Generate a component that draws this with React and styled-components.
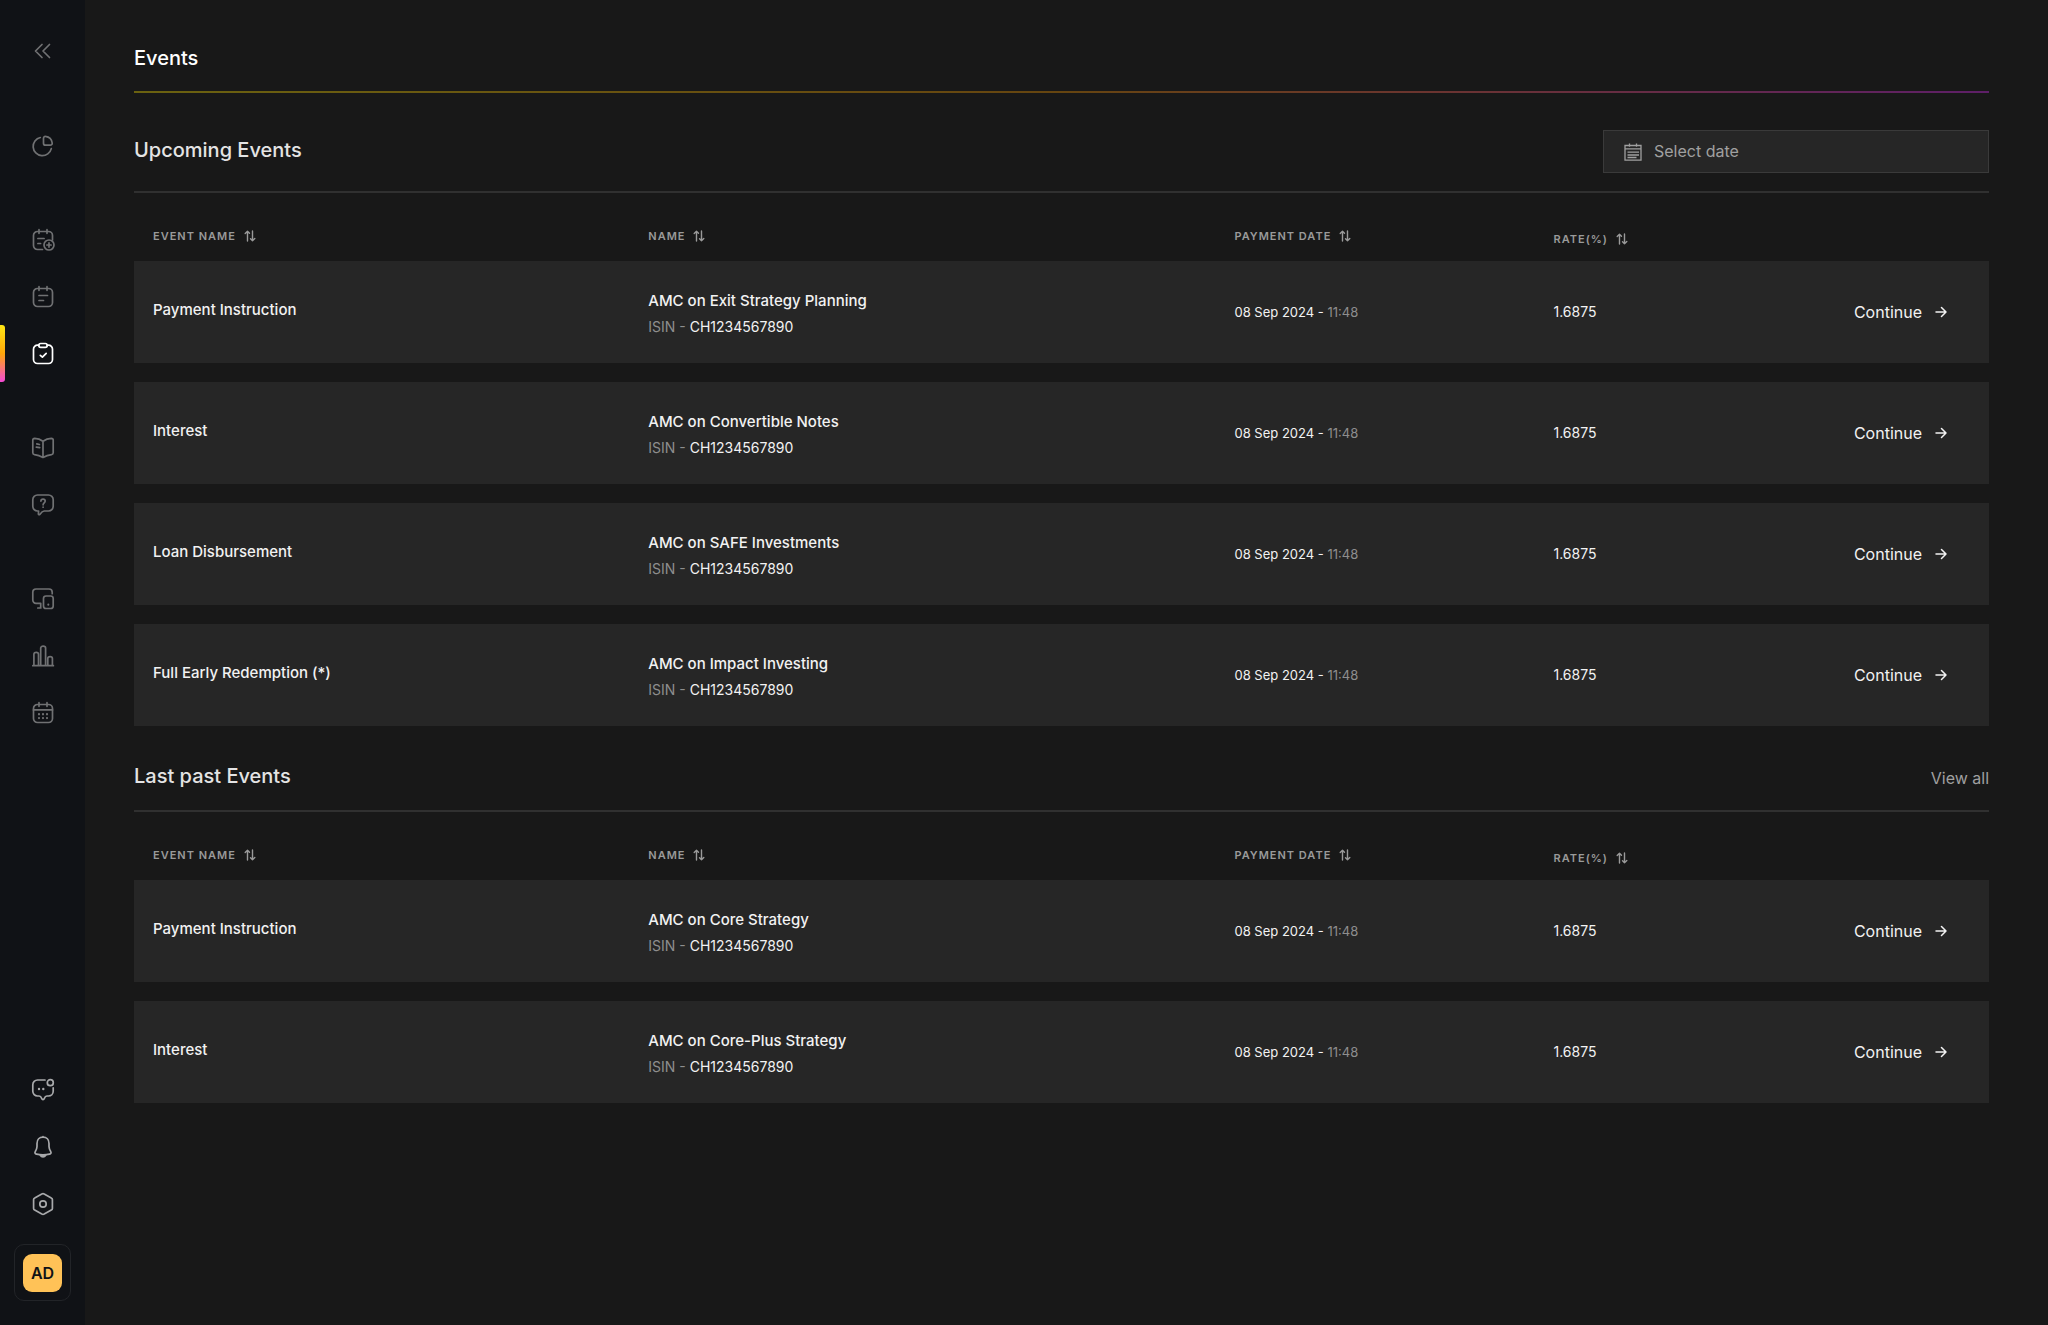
import React, { useState } from "react";
import styled, { createGlobalStyle } from "styled-components";

const GlobalStyle = createGlobalStyle`
  * {
    box-sizing: border-box;
  }
  body {
    margin: 0;
    background: #181818;
    color: #f2f2f2;
    font-family: Inter, "Liberation Sans", sans-serif;
    font-size: 16px;
    line-height: 24px;
  }
  button,
  input {
    font: inherit;
    color: inherit;
  }
  button {
    padding: 0;
    border: 0;
    background: none;
    cursor: pointer;
  }
`;

const Layout = styled.div`
  display: flex;
  min-height: 100vh;
`;

const Sidebar = styled.aside`
  flex: none;
  display: flex;
  flex-direction: column;
  align-items: stretch;
  width: 85px;
  padding: 22px 0 24px;
  background: #101216;
`;

const Nav = styled.nav`
  display: flex;
  flex-direction: column;
  gap: 37px;
  margin: 38px 0 auto;
`;

const NavGroup = styled.div`
  display: flex;
  flex-direction: column;
`;

const NavButton = styled.button`
  position: relative;
  display: flex;
  align-items: center;
  justify-content: center;
  height: 57px;
  color: ${({ $active, $bright }) =>
    $active ? "#ffffff" : $bright ? "#a8a9ab" : "#707173"};
  ${({ $active }) =>
    $active &&
    `
    &::before {
      content: "";
      position: absolute;
      left: 0;
      top: 0;
      width: 5px;
      height: 100%;
      border-radius: 0 3px 3px 0;
      background: linear-gradient(#ffe714, #ffa60a 50%, #f54ad6);
    }
  `}
`;

const Account = styled.button`
  display: flex;
  align-items: center;
  justify-content: center;
  align-self: center;
  width: 57px;
  height: 57px;
  margin-top: 12px;
  border: 1px solid #222428;
  border-radius: 10px;
`;

const Avatar = styled.span`
  width: 39px;
  height: 38px;
  border-radius: 9px;
  background: #ffc257;
  color: #101216;
  font-weight: 600;
  line-height: 38px;
`;

const Main = styled.main`
  flex: 1;
  min-width: 0;
  padding: 44px 59px 44px 49px;
`;

const PageTitle = styled.h1`
  margin: 0;
  padding-bottom: 19px;
  border-bottom: 2px solid;
  border-image: linear-gradient(
      90deg,
      #6b6210,
      #664510 50%,
      #6b3430 70%,
      #5e1f68
    )
    1;
  color: #ffffff;
  font-size: 20px;
  font-weight: 500;
  line-height: 28px;
`;

const SectionHead = styled.header`
  display: flex;
  align-items: ${({ $compact }) => ($compact ? "flex-end" : "flex-start")};
  justify-content: space-between;
  padding: ${({ $compact }) => ($compact ? "17px 0 20px" : "37px 0 18px")};
  border-bottom: 2px solid #303030;
`;

const SectionTitle = styled.h2`
  margin: 0;
  color: #e4e4e4;
  font-size: 20px;
  font-weight: 500;
  line-height: ${({ $tall }) => ($tall ? "40px" : "28px")};
`;

const DateField = styled.label`
  display: flex;
  align-items: center;
  gap: 12px;
  width: 386px;
  height: 43px;
  padding: 0 20px;
  border: 1px solid #3a3a3a;
  background: #262626;
  color: #a0a0a0;
`;

const DateInput = styled.input`
  flex: 1;
  min-width: 0;
  height: 24px;
  padding: 0 0 2px;
  border: 0;
  outline: 0;
  background: none;
  &::placeholder {
    color: #a0a0a0;
    opacity: 1;
  }
`;

const ViewAll = styled.a`
  color: #a0a0a0;
  text-decoration: none;
`;

const Table = styled.table`
  width: 100%;
  table-layout: fixed;
  border-spacing: 0;
`;

const HeadCell = styled.th`
  width: ${({ $width }) => $width};
  height: 68px;
  padding: ${({ $low }) => ($low ? "39px" : "36px")} 19px 0;
  text-align: left;
  vertical-align: top;
`;

const SortButton = styled.button`
  display: flex;
  align-items: center;
  gap: 8px;
  color: #9a9a9a;
  font-size: 11px;
  font-weight: 600;
  letter-spacing: 1px;
  line-height: 14px;
  text-transform: uppercase;
`;

const Cell = styled.td`
  height: 121px;
  padding: 0 19px;
  border-bottom: 19px solid transparent;
  background: #262626;
  background-clip: padding-box;
  font-size: ${({ $size }) => $size || "16px"};
`;

const EventName = styled.div`
  padding-bottom: 4px;
  font-size: 15px;
  font-weight: 500;
`;

const ProductName = styled.div`
  padding-top: 2px;
  font-size: 15px;
  font-weight: 500;
`;

const Isin = styled.div`
  margin-top: 4px;
  font-size: 14px;
  line-height: 20px;
`;

const Muted = styled.span`
  color: #8e8e8e;
`;

const ContinueCell = styled(Cell)`
  padding-right: 42px;
`;

const Continue = styled.button`
  display: flex;
  align-items: center;
  gap: 13px;
  margin-left: auto;
`;

const Svg = ({ size = 24, stroke = 1.7, children }) => (
  <svg
    width={size}
    height={size}
    viewBox={`0 0 ${size} ${size}`}
    fill="none"
    stroke="currentColor"
    strokeWidth={stroke}
    strokeLinecap="round"
    strokeLinejoin="round"
    aria-hidden="true"
  >
    {children}
  </svg>
);

const PAD =
  "M6.5 3.5h11a4 4 0 0 1 4 4v10a4 4 0 0 1-4 4h-11a4 4 0 0 1-4-4v-10a4 4 0 0 1 4-4z";

const icons = {
  collapse: <path d="M11 5.500 4.500 12l6.500 6.500M18.500 5.500 12 12l6.500 6.500" />,
  overview: (
    <>
      <path d="M9.300 3.500A9.200 9.200 0 1 0 20.300 14.600" />
      <path d="M12.500 4.300c0-1.200.9-2.100 2.100-1.900 3.500.5 6.100 3.200 6.600 6.600.2 1.200-.7 2.200-1.900 2.200h-4.800a2 2 0 0 1-2-2z" />
    </>
  ),
  eventAdd: (
    <>
      <path d="M11.500 21.500h-5a4 4 0 0 1-4-4v-10a4 4 0 0 1 4-4h11a4 4 0 0 1 4 4v4.500M8 1.700v3.600M16 1.700v3.600M6.900 10.500h6.200M6.900 15.500h2.700" />
      <circle cx="18" cy="17" r="5" />
      <path d="M18 14.900v4.200M15.900 17h4.200" />
    </>
  ),
  eventList: (
    <>
      <path d={PAD} />
      <path d="M8 1.700v3.600M16 1.700v3.600M8 10.500h8.500M8 15.500h4.500" />
    </>
  ),
  eventCheck: (
    <>
      <path d="M7.800 3.200h-1.300a4 4 0 0 0-4 4v10.300a4 4 0 0 0 4 4h11a4 4 0 0 0 4-4v-10.300a4 4 0 0 0-4-4h-1.300" />
      <rect x="7.800" y="1.500" width="8.400" height="3.800" rx="1.900" />
      <path d="m9.300 13.300 2.100 1.900 3.800-3.900" />
    </>
  ),
  book: (
    <>
      <path d="M12 5.200C9.800 3.600 6.900 2.400 3.700 2.300 2.600 2.300 1.800 3 1.800 4.100v12.600c0 1 .7 1.700 1.700 1.900 3.100.4 5.900 1.400 8.500 2.900 2.600-1.500 5.400-2.500 8.500-2.900 1-.2 1.700-.9 1.700-1.900V4.100c0-1.100-.8-1.800-1.900-1.800C17.100 2.400 14.200 3.600 12 5.200zM12 5.200v16.300" />
      <path d="m5.800 7.900 2.600.6M5.300 11.100l3.400.6" />
    </>
  ),
  help: (
    <>
      <path d="M6.500 2h11a4.700 4.700 0 0 1 4.700 4.700v6.600A4.700 4.700 0 0 1 17.500 18h-4.300c-1.300.2-2.700 1.200-4.200 3.200-.7.900-1.700.6-1.600-.5l.2-2.700H6.500a4.700 4.700 0 0 1-4.700-4.700V6.700A4.700 4.700 0 0 1 6.500 2z" />
      <path d="M9.900 8.100c.1-2.800 4.300-2.700 4.300 0 0 1.800-2.100 1.800-2.100 3.700M12.100 14.100v.1" />
    </>
  ),
  devices: (
    <>
      <path d="M21.200 6.700V5.200A3.200 3.200 0 0 0 18 2H5a3.200 3.200 0 0 0-3.200 3.200v7.900A3.200 3.200 0 0 0 5 16.300h4.700v4.700M6.800 21h3" />
      <rect x="12.500" y="9" width="9.700" height="12.500" rx="2.500" />
      <path d="M17.300 17.500v.3" strokeWidth="2" />
    </>
  ),
  stats: (
    <path d="M1.800 21.700h20.600M2.900 21.500V10.200c0-2.500 4.600-2.500 4.600 0v11.300M9.700 21.500V4.100c0-2.700 4.900-2.700 4.900 0v17.400M16.800 21.500v-7c0-2.500 4.600-2.500 4.600 0v7" />
  ),
  calendar: (
    <>
      <path d={PAD} />
      <path d="M8 1.700v3.600M16 1.700v3.600M2.500 8.900h19" />
      <path
        d="M8 13.200v.1M12 13.200v.1M16 13.200v.1M8 17v.1M12 17v.1M16 17v.1"
        strokeWidth="2.200"
      />
    </>
  ),
  chat: (
    <>
      <path d="M14 2H6.500a4.700 4.700 0 0 0-4.700 4.700v6.600A4.700 4.700 0 0 0 6.500 18h1.600c1.500 0 2 .8 2.600 2.500.5 1.400 2.100 1.400 2.600 0 .6-1.700 1.100-2.500 2.600-2.500h1.600a4.700 4.700 0 0 0 4.700-4.700v-3.500" />
      <circle cx="19.300" cy="4.700" r="3" />
      <path d="M8 11v.1M12.300 11v.1" strokeWidth="2.400" />
    </>
  ),
  bell: (
    <>
      <path d="M12 2.200c-3.600 0-6 2.500-6 6.200v3.200c0 1.900-.7 3.300-1.700 4.900-.8 1.200-.2 2.300 1.100 2.600 4.300.9 8.900.9 13.200 0 1.300-.3 1.900-1.400 1.100-2.600-1-1.600-1.700-3-1.700-4.900V8.400c0-3.700-2.400-6.200-6-6.200zM12 1.500v.7" />
      <path d="M9.300 20.300c1.200 2 4.200 2 5.400 0z" fill="currentColor" />
    </>
  ),
  settings: (
    <>
      <path d="M10.800 1.900 3.700 5.900c-.8.400-1.100 1-1.100 1.700v8.800c0 .7.300 1.300 1.100 1.700l7.100 4c.8.400 1.600.4 2.400 0l7.100-4c.8-.4 1.100-1 1.100-1.700V7.600c0-.7-.3-1.300-1.100-1.700l-7.100-4c-.8-.4-1.600-.4-2.400 0z" />
      <circle cx="12" cy="12" r="3.200" />
    </>
  ),
};

const SortIcon = () => (
  <Svg size={12} stroke={1.4}>
    <path d="M3.500 11V1.200M1.200 3.500l2.300-2.300 2 2M8.500 1v9.800M6.500 8.800l2 2 2.300-2.300" />
  </Svg>
);

const ArrowIcon = () => (
  <Svg size={12} stroke={1.5}>
    <path d="M1 6h10M6.500 1.500 11 6l-4.500 4.500" />
  </Svg>
);

const DateIcon = () => (
  <Svg size={18} stroke={1.3}>
    <path
      d="M1 2.500h16v14.700H1zM1 5.800h16M5.500.5v3.300M12.500.5v3.300M3.500 9.200h11.500M3.500 12h11.500M3.500 14.500h9"
      strokeLinecap="butt"
      strokeLinejoin="miter"
    />
  </Svg>
);

const navGroups = [
  [["overview", "Overview"]],
  [
    ["eventAdd", "New event"],
    ["eventList", "Products"],
    ["eventCheck", "Events"],
  ],
  [
    ["book", "Guide"],
    ["help", "Help"],
  ],
  [
    ["devices", "Devices"],
    ["stats", "Statistics"],
    ["calendar", "Calendar"],
  ],
];

const footerItems = [
  ["chat", "Messages"],
  ["bell", "Notifications"],
  ["settings", "Settings"],
];

const columns = [
  { label: "Event name", width: "26.7%" },
  { label: "Name", width: "31.6%" },
  { label: "Payment date", width: "17.2%" },
  { label: "Rate(%)", width: "12%", low: true },
];

const upcoming = [
  { event: "Payment Instruction", name: "AMC on Exit Strategy Planning" },
  { event: "Interest", name: "AMC on Convertible Notes" },
  { event: "Loan Disbursement", name: "AMC on SAFE Investments" },
  { event: "Full Early Redemption (*)", name: "AMC on Impact Investing" },
];

const past = [
  { event: "Payment Instruction", name: "AMC on Core Strategy" },
  { event: "Interest", name: "AMC on Core-Plus Strategy" },
];

const EventsTable = ({ rows }) => (
  <Table>
    <thead>
      <tr>
        {columns.map(({ label, width, low }) => (
          <HeadCell key={label} scope="col" $width={width} $low={low}>
            <SortButton type="button">
              {label}
              <SortIcon />
            </SortButton>
          </HeadCell>
        ))}
        <HeadCell as="td" />
      </tr>
    </thead>
    <tbody>
      {rows.map(({ event, name }) => (
        <tr key={name}>
          <Cell>
            <EventName>{event}</EventName>
          </Cell>
          <Cell>
            <ProductName>{name}</ProductName>
            <Isin>
              <Muted>ISIN - </Muted>CH1234567890
            </Isin>
          </Cell>
          <Cell $size="13px">
            08 Sep 2024 - <Muted>11:48</Muted>
          </Cell>
          <Cell $size="14px">1.6875</Cell>
          <ContinueCell>
            <Continue type="button">
              Continue
              <ArrowIcon />
            </Continue>
          </ContinueCell>
        </tr>
      ))}
    </tbody>
  </Table>
);

const App = () => {
  const [active, setActive] = useState("eventCheck");
  const [date, setDate] = useState("");

  return (
    <Layout>
      <GlobalStyle />
      <Sidebar>
        <NavButton type="button" aria-label="Collapse menu">
          <Svg>{icons.collapse}</Svg>
        </NavButton>
        <Nav>
          {navGroups.map((group) => (
            <NavGroup key={group[0][0]}>
              {group.map(([id, label]) => (
                <NavButton
                  key={id}
                  type="button"
                  aria-label={label}
                  $active={active === id}
                  onClick={() => setActive(id)}
                >
                  <Svg>{icons[id]}</Svg>
                </NavButton>
              ))}
            </NavGroup>
          ))}
        </Nav>
        {footerItems.map(([id, label]) => (
          <NavButton key={id} type="button" aria-label={label} $bright>
            <Svg>{icons[id]}</Svg>
          </NavButton>
        ))}
        <Account type="button" aria-label="Account">
          <Avatar>AD</Avatar>
        </Account>
      </Sidebar>
      <Main>
        <PageTitle>Events</PageTitle>
        <section>
          <SectionHead>
            <SectionTitle $tall>Upcoming Events</SectionTitle>
            <DateField>
              <DateIcon />
              <DateInput
                type="text"
                aria-label="Select date"
                placeholder="Select date"
                value={date}
                onChange={(e) => setDate(e.target.value)}
              />
            </DateField>
          </SectionHead>
          <EventsTable rows={upcoming} />
        </section>
        <section>
          <SectionHead $compact>
            <SectionTitle>Last past Events</SectionTitle>
            <ViewAll href="#past">View all</ViewAll>
          </SectionHead>
          <EventsTable rows={past} />
        </section>
      </Main>
    </Layout>
  );
};

export default App;
